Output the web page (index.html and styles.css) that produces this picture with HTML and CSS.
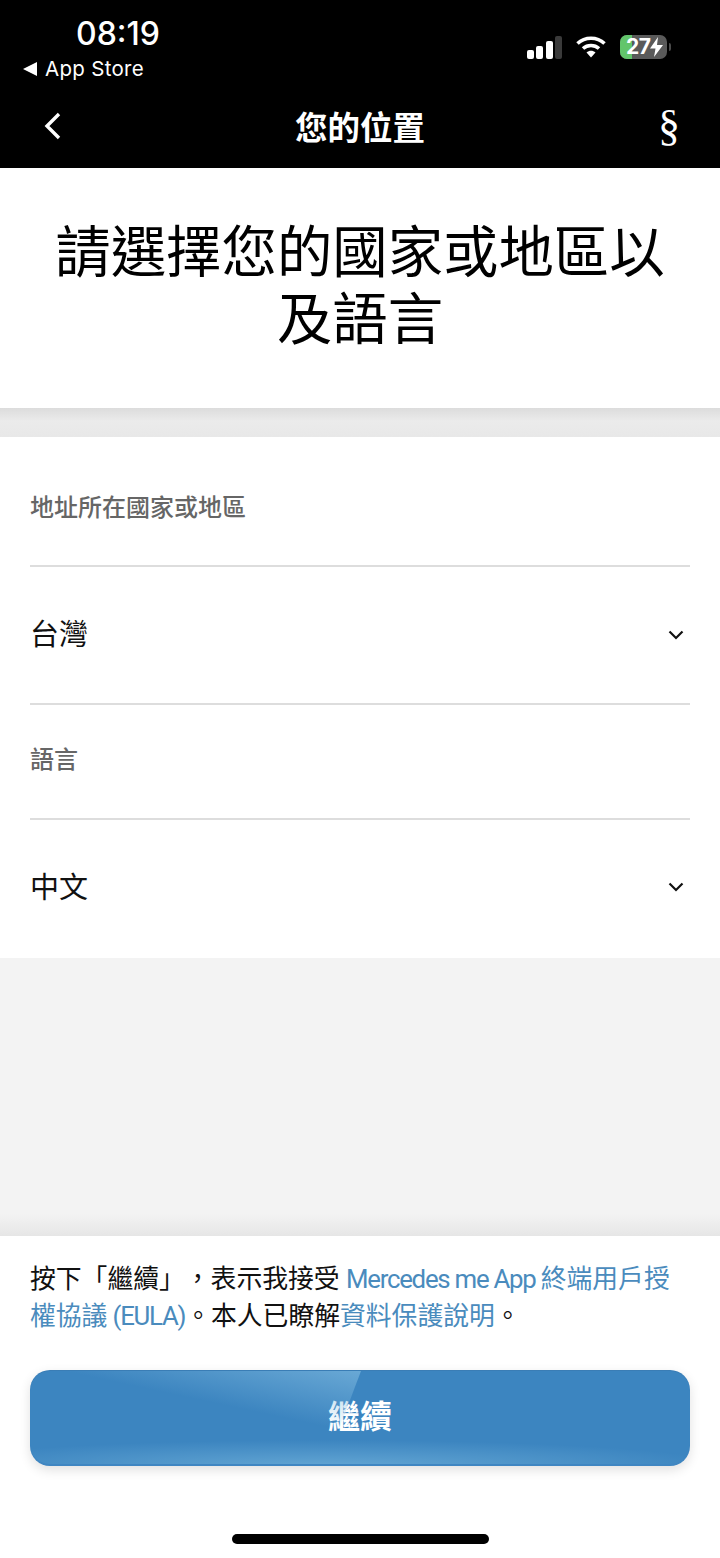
FILE: index.html
```html
<!DOCTYPE html>
<html lang="zh-TW">
<head>
<meta charset="UTF-8">
<meta name="viewport" content="width=device-width, initial-scale=1.0">
<title>您的位置</title>
<link rel="stylesheet" href="styles.css">
</head>
<body>
<div class="page">
  <header class="top">
    <div class="status">
      <div class="status-left">
        <div class="time">08:19</div>
        <div class="back-app"><span class="tri"></span>App Store</div>
      </div>
      <div class="status-right">
        <div class="signal">
          <span class="bar b1"></span>
          <span class="bar b2"></span>
          <span class="bar b3"></span>
          <span class="bar b4"></span>
        </div>
        <svg class="wifi" width="32" height="24" viewBox="0 0 32 24">
          <path d="M2.5 8.5C10 1.5 22 1.5 29.5 8.5" fill="none" stroke="#fff" stroke-width="3.6"/>
          <path d="M8 13.5C12.5 9.5 19.5 9.5 24 13.5" fill="none" stroke="#fff" stroke-width="3.6"/>
          <path d="M11.5 17.5C14.2 15.2 17.8 15.2 20.5 17.5L16 22.5Z" fill="#fff"/>
        </svg>
        <div class="battery">
          <div class="battery-body"><span class="battery-fill"></span><span class="battery-num">27</span>
            <svg class="bolt" width="13" height="20" viewBox="0 0 13 20"><path d="M8 0L0 11.5H5.5L4 20L13 8H7Z" fill="#fff"/></svg>
          </div>
          <span class="battery-cap"></span>
        </div>
      </div>
    </div>
    <nav class="nav">
      <svg class="chev" width="18" height="28" viewBox="0 0 18 28"><path d="M15 2L3 14L15 26" fill="none" stroke="#fff" stroke-width="3.4"/></svg>
      <div class="nav-title">您的位置</div>
      <div class="para">§</div>
    </nav>
  </header>

  <section class="intro">
    <h1>請選擇您的國家或地區以及語言</h1>
  </section>

  <div class="gap-top"></div>

  <section class="form">
    <div class="label-row row-a">地址所在國家或地區</div>
    <div class="select-row row-b"><span>台灣</span>
      <svg class="down" width="16" height="10" viewBox="0 0 16 10"><path d="M1.5 1.5L8 8L14.5 1.5" fill="none" stroke="#111" stroke-width="2.2"/></svg>
    </div>
    <div class="label-row row-c">語言</div>
    <div class="select-row row-d"><span>中文</span>
      <svg class="down" width="16" height="10" viewBox="0 0 16 10"><path d="M1.5 1.5L8 8L14.5 1.5" fill="none" stroke="#111" stroke-width="2.2"/></svg>
    </div>
  </section>

  <div class="gap-bottom"></div>

  <footer class="foot">
    <p class="legal">按下「繼續」，表示我接受 <a class="link"><span class="latin">Mercedes me App </span>終端用戶授</a><a class="link">權協議<span class="latin"> (EULA)</span></a>。本人已瞭解<a class="link">資料保護說明</a>。</p>
    <button class="cta">繼續</button>
    <div class="home"></div>
  </footer>
</div>
</body>
</html>
```

FILE: styles.css
```css
html, body {
  margin: 0;
  padding: 0;
}
body {
  font-family: "Noto Sans CJK TC", "Noto Sans", sans-serif;
  background: #fff;
  color: #111;
}
.page {
  width: 720px;
  height: 1558px;
  display: flex;
  flex-direction: column;
  overflow: hidden;
}

/* header */
.top {
  height: 168px;
  background: #000;
  color: #fff;
  flex-shrink: 0;
}
.status {
  height: 86px;
  display: flex;
  justify-content: space-between;
}
.status-left {
  padding: 14px 0 0 23px;
}
.time {
  font-family: Inter, sans-serif;
  font-size: 32px;
  font-weight: 500;
  line-height: 40px;
  margin-left: 53px;
}
.back-app {
  font-family: Inter, sans-serif;
  font-size: 20.5px;
  line-height: 30px;
  display: flex;
  align-items: center;
  letter-spacing: 0.3px;
}
.tri {
  width: 0;
  height: 0;
  border-top: 7px solid transparent;
  border-bottom: 7px solid transparent;
  border-right: 14px solid #fff;
  margin-right: 8px;
}
.status-right {
  display: flex;
  align-items: center;
  height: 24px;
  padding: 35px 49px 0 0;
}
.signal {
  display: flex;
  align-items: flex-end;
  gap: 2.5px;
  margin-right: 13px;
}
.bar {
  width: 7px;
  border-radius: 2px;
  background: #fff;
}
.b1 { height: 9px; }
.b2 { height: 13px; }
.b3 { height: 18px; }
.b4 { height: 23px; background: #3a3a3a; }
.wifi {
  margin-right: 13px;
}
.battery {
  display: flex;
  align-items: center;
}
.battery-body {
  position: relative;
  width: 47px;
  height: 24px;
  border-radius: 7px;
  background: #5a5a5a;
  overflow: hidden;
  display: flex;
  align-items: center;
  color: #fff;
  font-family: Inter, sans-serif;
  font-weight: 700;
  font-size: 21px;
}
.battery-fill {
  position: absolute;
  left: 0;
  top: 0;
  bottom: 0;
  width: 12px;
  background: #62c56b;
}
.battery-num {
  position: relative;
  margin-left: 6px;
  line-height: 24px;
  letter-spacing: -0.5px;
}
.bolt {
  position: relative;
}
.battery-cap {
  width: 2px;
  height: 8px;
  margin-left: 2px;
  background: #4a4a4a;
  border-radius: 0 2px 2px 0;
}
.nav {
  height: 82px;
  display: grid;
  grid-template-columns: 1fr auto 1fr;
  align-items: center;
  padding: 0 40px 2px 44px;
  box-sizing: border-box;
}
.nav-title {
  font-size: 32.5px;
  font-weight: 700;
  line-height: 40px;
  margin-left: -4px;
}
.para {
  font-family: "Liberation Serif", serif;
  font-size: 44px;
  line-height: 44px;
  width: 22px;
  text-align: center;
  justify-self: end;
}

/* heading */
.intro {
  height: 240px;
  flex-shrink: 0;
  box-sizing: border-box;
  padding: 47px 40px 0;
  background: #fff;
}
h1 {
  margin: 0;
  font-size: 55.4px;
  font-weight: 400;
  line-height: 66.5px;
  text-align: center;
  color: #000;
}
.gap-top {
  height: 29px;
  flex-shrink: 0;
  background: linear-gradient(#dcdcdc, #ebebeb 45%, #e8e8e8);
}

/* form */
.form {
  padding: 0 30px;
  background: #fff;
  flex-shrink: 0;
}
.label-row {
  font-size: 24px;
  font-weight: 500;
  color: #666;
  line-height: 32px;
  border-bottom: 2px solid #ddd;
  box-sizing: border-box;
}
.row-a {
  height: 130px;
  padding-top: 53px;
}
.row-c {
  height: 115px;
  padding-top: 37px;
}
.select-row {
  display: flex;
  align-items: center;
  justify-content: space-between;
  font-size: 29px;
  color: #111;
  border-bottom: 2px solid #ddd;
  box-sizing: border-box;
  padding: 0 6px 6px 0;
}
.down {
  margin-top: 5px;
}
.row-b {
  height: 138px;
}
.row-d {
  height: 138px;
  border-bottom: 0;
  padding-bottom: 9px;
}
.gap-bottom {
  flex: 1;
  background: linear-gradient(#f3f3f3 92%, #e6e6e6);
}

/* footer */
.foot {
  height: 322px;
  flex-shrink: 0;
  box-sizing: border-box;
  padding: 25px 30px 0;
  background: #fff;
  display: flex;
  flex-direction: column;
}
.legal {
  margin: 0;
  font-family: Roboto, "Noto Sans CJK TC", sans-serif;
  font-size: 25.8px;
  line-height: 37px;
  color: #111;
  text-spacing-trim: space-all;
}
.link {
  color: #4a8bbd;
}
.latin {
  letter-spacing: -1.25px;
}
.cta {
  position: relative;
  margin-top: 35px;
  height: 96px;
  border: 0;
  border-radius: 20px;
  padding: 0 0 8px;
  color: #fff;
  font-family: inherit;
  font-size: 32px;
  font-weight: 700;
  background:
    radial-gradient(ellipse 60% 26px at 45% 100%, #62a5d3, rgba(98,165,211,0)),
    #3c85c0;
  box-shadow: 0 4px 12px rgba(0,0,0,0.12), inset 0 1px 0 #3a7db5, inset 0 -2px 0 #3f86c2;
  overflow: hidden;
}
.cta::before {
  content: "";
  position: absolute;
  left: 0;
  top: 1px;
  width: 331px;
  height: 70px;
  background: linear-gradient(12deg, rgba(120,180,220,0) 55%, rgba(120,180,220,0.75));
  clip-path: polygon(0 0, 100% 0, 92% 100%, 0 100%);
}
.home {
  width: 257px;
  height: 10px;
  border-radius: 5px;
  background: #000;
  margin: 68px auto 0;
}
```
